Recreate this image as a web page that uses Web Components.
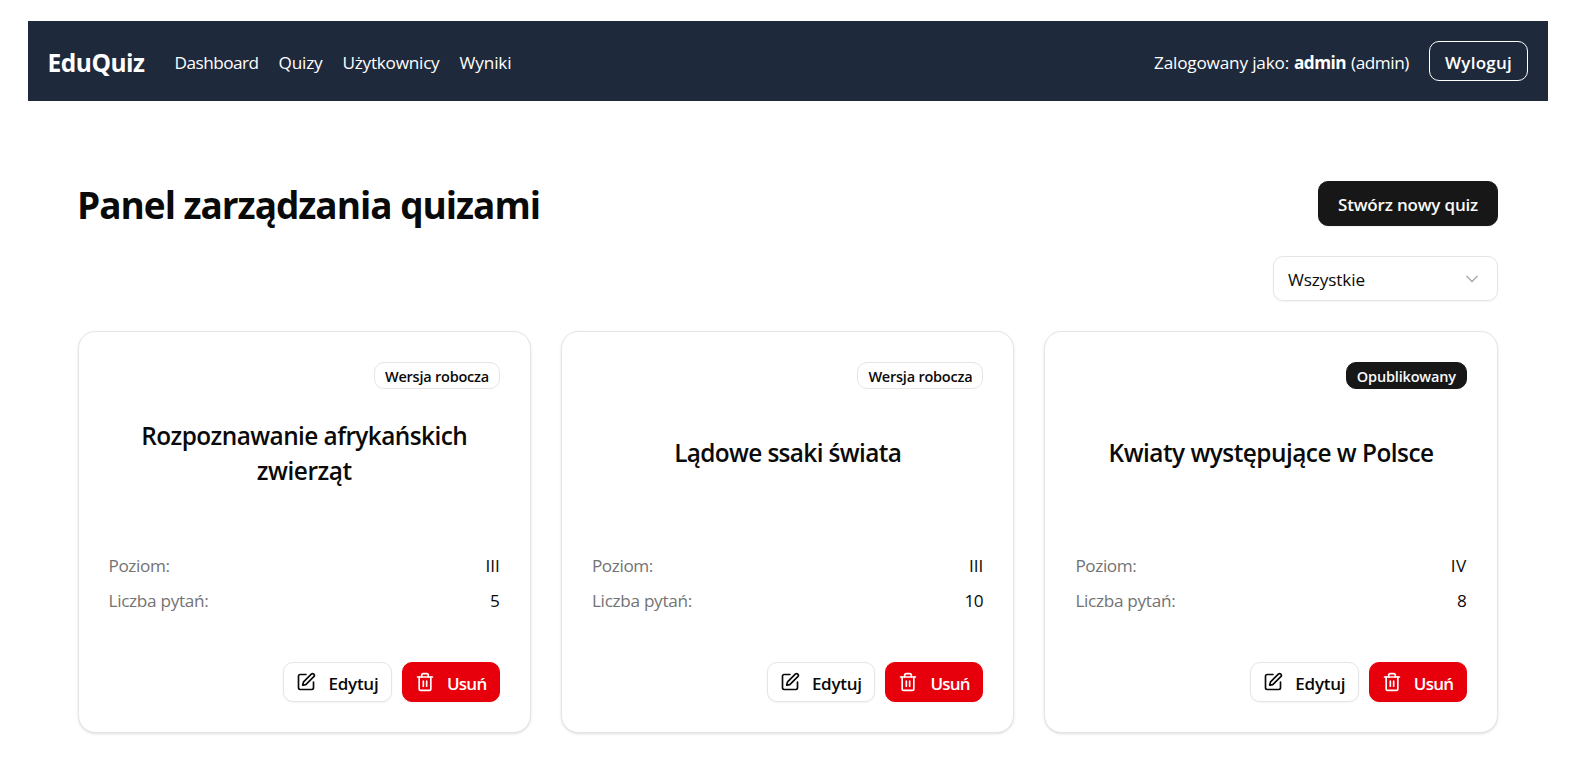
<!DOCTYPE html>
<html lang="pl">
<head>
<meta charset="utf-8">
<title>EduQuiz</title>
<style>
body{margin:0;background:#fff;color:#0a0a0a;font:17px/25px "Open Sans","Noto Sans",sans-serif}
</style>
</head>
<body>
<quiz-app></quiz-app>
<script>
const define=(name,html,setup)=>{
  const t=document.createElement('template');t.innerHTML=html;
  customElements.define(name,class extends HTMLElement{
    connectedCallback(){
      if(this.shadowRoot)return;
      this.attachShadow({mode:'open'}).append(t.content.cloneNode(true));
      if(setup)setup(this,this.shadowRoot);
    }
  });
};

// A single line of text tracked to a given measure (attribute w, in px).
define('fit-text',`<style>:host{display:inline-block;white-space:nowrap}</style><slot></slot>`,el=>{
  const w=+el.getAttribute('w'),n=el.textContent.length;
  const natural=el.getBoundingClientRect().width;
  el.style.letterSpacing=((w-natural)/n).toFixed(3)+'px';
  el.style.width=w+'px';
});

const ICONS={
  edit:'<path d="M12 3H5a2 2 0 0 0-2 2v14a2 2 0 0 0 2 2h14a2 2 0 0 0 2-2v-7"/><path d="M18.375 2.625a1 1 0 0 1 3 3l-9.013 9.014a2 2 0 0 1-.853.505l-2.873.84a.5.5 0 0 1-.62-.62l.84-2.873a2 2 0 0 1 .506-.852z"/>',
  trash:'<path d="M3 6h18"/><path d="M19 6v14a2 2 0 0 1-2 2H7a2 2 0 0 1-2-2V6"/><path d="M8 6V4a2 2 0 0 1 2-2h4a2 2 0 0 1 2 2v2"/><path d="M10 11v6M14 11v6"/>',
  chevron:'<path d="m6 9 6 6 6-6"/>'
};
define('ui-icon',`<style>:host{display:block;width:20px;height:20px;flex:none}svg{display:block}</style><svg width="20" height="20" viewBox="0 0 24 24" fill="none" stroke="currentColor" stroke-width="2" stroke-linecap="round" stroke-linejoin="round"></svg>`,
  (el,r)=>{r.querySelector('svg').innerHTML=ICONS[el.getAttribute('name')]});

define('ui-button',`<style>
:host{--drop:2px;display:flex;box-sizing:border-box;align-items:center;height:40px;border-radius:10px;font-weight:600;font-size:17px;gap:12px;padding:0 12.5px 0 12px;border:1px solid #e5e5e5;background:#fff;box-shadow:0 1px 2px rgba(0,0,0,.05)}
:host([kind=danger]){background:#e7000b;border-color:#e7000b;color:#fff}
:host([kind=ghost]){background:none;border-color:#fff;color:#fff;padding:0 15px;box-shadow:none}
:host([kind=primary]){--drop:1px;background:#171717;border-color:#171717;color:#fafafa;height:45px;padding:0 19px}
::slotted(fit-text){margin-top:var(--drop)}
</style><slot></slot>`);

define('ui-badge',`<style>
:host{display:flex;box-sizing:border-box;align-items:center;height:27px;border-radius:10px;border:1px solid #e5e5e5;padding:1px 10px 0;font-size:14.5px;font-weight:600}
:host([solid]){background:#171717;border-color:#171717;color:#fafafa}
</style><slot></slot>`);

define('ui-select',`<style>
:host{display:flex;box-sizing:border-box;width:225px;height:45px;align-items:center;justify-content:space-between;padding:0 15px 0 14px;border:1px solid #e5e5e5;border-radius:10px;box-shadow:0 1px 2px rgba(0,0,0,.05);font-size:17.2px}
ui-icon{opacity:.32}
::slotted(fit-text){margin-top:2px}
</style><slot></slot><ui-icon name="chevron"></ui-icon>`);

define('nav-bar',`<style>
:host{display:flex;box-sizing:border-box;height:80px;align-items:center;padding:0 20px 0 19.5px;background:#1e293b;color:#fff;font-size:17.2px}
.brand{font-weight:700;font-size:24.5px;line-height:35px;margin:3px 30px 0 0}
nav{display:flex;gap:20px;flex:1;margin-top:2px}
.user{margin:2px 20px 0 0;display:flex;gap:5px}
b{font-weight:700}
</style>
<div class="brand"><fit-text w="97">EduQuiz</fit-text></div>
<nav><fit-text w="84">Dashboard</fit-text><fit-text w="44">Quizy</fit-text><fit-text w="97">Użytkownicy</fit-text><fit-text w="52">Wyniki</fit-text></nav>
<div class="user"><fit-text w="135">Zalogowany jako:</fit-text><b><fit-text w="52">admin</fit-text></b><fit-text w="58">(admin)</fit-text></div>
<ui-button kind="ghost"><fit-text w="67">Wyloguj</fit-text></ui-button>`);

define('quiz-card',`<style>
:host{display:flex;flex-direction:column;box-sizing:border-box;height:402px;padding:30px;border:1px solid #e5e5e5;border-radius:17.5px;background:#fff;box-shadow:0 1px 3px rgba(0,0,0,.1),0 1px 2px -1px rgba(0,0,0,.1)}
.top{display:flex;justify-content:flex-end}
h2{margin:0;height:127px;display:flex;flex-direction:column;align-items:center;justify-content:center;font-size:24.4px;line-height:35px;font-weight:600}
dl{margin:37px 0 0;display:grid;gap:10px;font-size:17.2px}
dl div{display:flex;justify-content:space-between}
dt{color:#737373}dd{margin:0}
.actions{display:flex;justify-content:flex-end;gap:10px;margin-top:auto}
</style>
<div class="top"><slot name="badge"></slot></div>
<h2><slot name="title"></slot></h2>
<dl><div><dt><fit-text w="61">Poziom:</fit-text></dt><dd><slot name="level"></slot></dd></div>
<div><dt><fit-text w="100">Liczba pytań:</fit-text></dt><dd><slot name="count"></slot></dd></div></dl>
<div class="actions"><ui-button><ui-icon name="edit"></ui-icon><fit-text w="50">Edytuj</fit-text></ui-button><ui-button kind="danger"><ui-icon name="trash"></ui-icon><fit-text w="39.5">Usuń</fit-text></ui-button></div>`);

define('quiz-app',`<style>
:host{display:block;padding:21px 23px 32px 28px}
main{padding:80px 50px 0}
.head{display:flex;justify-content:space-between;height:45px;align-items:center}
h1{margin:2px 0 0 -1px;font-size:37px;line-height:45px;font-weight:700}
.filter{display:flex;justify-content:flex-end;margin:30px 0}
.grid{display:grid;grid-template-columns:repeat(3,1fr);gap:30px;margin-left:-.5px;margin-right:.2px}
</style>
<nav-bar></nav-bar>
<main>
<div class="head"><h1><fit-text w="463">Panel zarządzania quizami</fit-text></h1><ui-button kind="primary"><fit-text w="140">Stwórz nowy quiz</fit-text></ui-button></div>
<div class="filter"><ui-select><fit-text w="77">Wszystkie</fit-text></ui-select></div>
<div class="grid">
<quiz-card><ui-badge slot="badge"><fit-text w="104">Wersja robocza</fit-text></ui-badge><fit-text slot="title" w="326">Rozpoznawanie afrykańskich</fit-text><fit-text slot="title" w="95">zwierząt</fit-text><fit-text slot="level" w="14.5">III</fit-text><span slot="count">5</span></quiz-card>
<quiz-card><ui-badge slot="badge"><fit-text w="104">Wersja robocza</fit-text></ui-badge><fit-text slot="title" w="227">Lądowe ssaki świata</fit-text><fit-text slot="level" w="14.5">III</fit-text><fit-text slot="count" w="19">10</fit-text></quiz-card>
<quiz-card><ui-badge slot="badge" solid><fit-text w="99">Opublikowany</fit-text></ui-badge><fit-text slot="title" w="325">Kwiaty występujące w Polsce</fit-text><fit-text slot="level" w="16">IV</fit-text><span slot="count">8</span></quiz-card>
</div>
</main>`);
</script>
</body>
</html>
